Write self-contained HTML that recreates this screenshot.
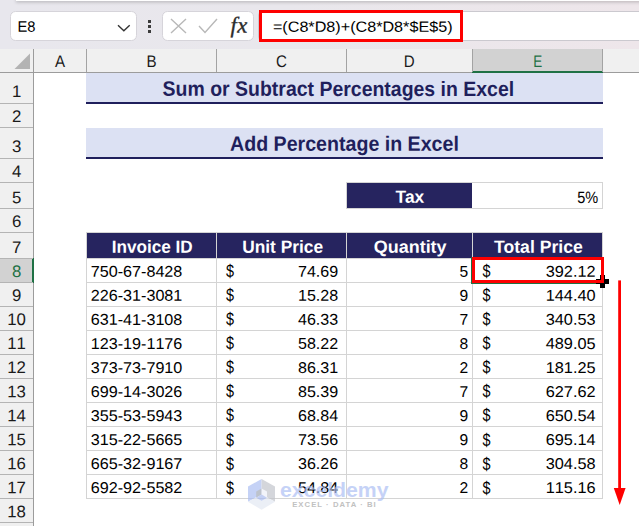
<!DOCTYPE html>
<html><head><meta charset="utf-8"><title>Add Percentage in Excel</title>
<style>
html,body{margin:0;padding:0;}
body{width:639px;height:526px;overflow:hidden;position:relative;background:#fff;font-family:"Liberation Sans",sans-serif;color:#000;}
.abs{position:absolute;}
.t{position:absolute;left:0;top:0;white-space:nowrap;line-height:1;transform-origin:0 0;}
.b{font-weight:bold;}
.nk{font-kerning:none;}
</style></head><body>
<div class="abs" style="left:0px;top:0px;width:639px;height:49px;background:linear-gradient(90deg,#e8e7ed 0%,#e9e7ec 45%,#eee6ea 100%);"></div>
<div class="abs" style="left:15.8px;top:-1px;width:629.2px;height:1.9px;background:#fff;box-shadow:0 1px 3.5px rgba(0,0,0,0.3);"></div>
<div class="abs" style="left:9.9px;top:10.8px;width:127px;height:30px;box-sizing:border-box;background:#fff;border-radius:5.5px;border:0.7px solid #d6d4da;"></div>
<span class="t" style="font-size:15.2px;transform:translate(17.40px,18.80px) rotate(0.03deg) scaleX(0.97);">E8</span>
<svg class="abs" style="left:116px;top:21px" width="16" height="12" viewBox="0 0 16 12"><path d="M2 4.2 L7.85 9.8 L13.7 4.2" fill="none" stroke="#333" stroke-width="1.4"/></svg>
<div class="abs" style="left:148px;top:20px;width:3.1px;height:2.7px;background:#3c3c3c;"></div>
<div class="abs" style="left:148px;top:25.1px;width:3.1px;height:2.7px;background:#3c3c3c;"></div>
<div class="abs" style="left:148px;top:30.2px;width:3.1px;height:2.7px;background:#3c3c3c;"></div>
<div class="abs" style="left:161.6px;top:10.8px;width:92.5px;height:30px;box-sizing:border-box;background:#fff;border-radius:5.5px;border:0.7px solid #d6d4da;"></div>
<svg class="abs" style="left:169px;top:17px" width="20" height="18" viewBox="0 0 20 18"><path d="M2 2 L17 16 M17 2 L2 16" fill="none" stroke="#b8b8b8" stroke-width="1.4"/></svg>
<svg class="abs" style="left:197.2px;top:17px" width="22" height="18" viewBox="0 0 22 18"><path d="M2 9 L8 15.5 L20 2" fill="none" stroke="#b8b8b8" stroke-width="1.4"/></svg>
<span class="t" style="font-family:'Liberation Serif',serif;font-style:italic;font-size:22.5px;color:#2b2b2b;-webkit-text-stroke:0.35px #2b2b2b;transform:translate(230.6px,14.4px) rotate(0.03deg);letter-spacing:0.4px;">fx</span>
<div class="abs" style="left:258px;top:10.7px;width:387px;height:30.1px;box-sizing:border-box;background:#fff;border:0.8px solid #cbc9cf;border-radius:4px 0 0 4px;"></div>
<div class="abs" style="left:259px;top:10px;width:204.1px;height:31.7px;box-sizing:border-box;border:3px solid #fe0000;"></div>
<span class="t" style="font-size:14.8px;transform:translate(272.90px,19.70px) rotate(0.03deg) scaleX(1.092);">=(C8*D8)+(C8*D8*$E$5)</span>
<div class="abs" style="left:0px;top:49px;width:639px;height:23.3px;background:#f0f0f0;"></div>
<div class="abs" style="left:0px;top:72.3px;width:33.5px;height:453.7px;background:#f0f0f0;"></div>
<div class="abs" style="left:472px;top:49px;width:131px;height:23.5px;background:#d2d2d2;"></div>
<div class="abs" style="left:0px;top:258.2px;width:33.5px;height:24px;background:#d2d2d2;"></div>
<div class="abs" style="left:33px;top:49px;width:1.1px;height:477px;background:#9c9c9c;"></div>
<div class="abs" style="left:0px;top:71.7px;width:639px;height:1.1px;background:#9c9c9c;"></div>
<div class="abs" style="left:472px;top:70.8px;width:131.2px;height:2px;background:#1f7145;"></div>
<div class="abs" style="left:32px;top:257.8px;width:1.9px;height:24.9px;background:#1f7145;"></div>
<div class="abs" style="left:86px;top:49.2px;width:1.1px;height:22.8px;background:#a3a3a3;"></div>
<div class="abs" style="left:216px;top:49.2px;width:1.1px;height:22.8px;background:#a3a3a3;"></div>
<div class="abs" style="left:346px;top:49.2px;width:1.1px;height:22.8px;background:#a3a3a3;"></div>
<div class="abs" style="left:471.5px;top:49.2px;width:1.1px;height:22.8px;background:#a3a3a3;"></div>
<div class="abs" style="left:602px;top:49.2px;width:1.1px;height:22.8px;background:#a3a3a3;"></div>
<div class="abs" style="left:0px;top:102.8px;width:33px;height:1.2px;background:#b4b4b4;"></div>
<div class="abs" style="left:0px;top:126.6px;width:33px;height:1.2px;background:#b4b4b4;"></div>
<div class="abs" style="left:0px;top:157.8px;width:33px;height:1.2px;background:#b4b4b4;"></div>
<div class="abs" style="left:0px;top:181.6px;width:33px;height:1.2px;background:#b4b4b4;"></div>
<div class="abs" style="left:0px;top:207.8px;width:33px;height:1.2px;background:#b4b4b4;"></div>
<div class="abs" style="left:0px;top:231.6px;width:33px;height:1.2px;background:#b4b4b4;"></div>
<div class="abs" style="left:0px;top:257.6px;width:33px;height:1.2px;background:#b4b4b4;"></div>
<div class="abs" style="left:0px;top:281.6px;width:33px;height:1.2px;background:#b4b4b4;"></div>
<div class="abs" style="left:0px;top:305.63px;width:33px;height:1.2px;background:#b4b4b4;"></div>
<div class="abs" style="left:0px;top:329.66px;width:33px;height:1.2px;background:#b4b4b4;"></div>
<div class="abs" style="left:0px;top:353.69px;width:33px;height:1.2px;background:#b4b4b4;"></div>
<div class="abs" style="left:0px;top:377.72px;width:33px;height:1.2px;background:#b4b4b4;"></div>
<div class="abs" style="left:0px;top:401.75px;width:33px;height:1.2px;background:#b4b4b4;"></div>
<div class="abs" style="left:0px;top:425.78px;width:33px;height:1.2px;background:#b4b4b4;"></div>
<div class="abs" style="left:0px;top:449.81px;width:33px;height:1.2px;background:#b4b4b4;"></div>
<div class="abs" style="left:0px;top:473.84px;width:33px;height:1.2px;background:#b4b4b4;"></div>
<div class="abs" style="left:0px;top:497.87px;width:33px;height:1.2px;background:#b4b4b4;"></div>
<div class="abs" style="left:0px;top:521.9px;width:33px;height:1.2px;background:#b4b4b4;"></div>
<svg class="abs" style="left:14px;top:53px" width="17" height="17" viewBox="0 0 17 17"><path d="M16 0.5 L16 16 L0.5 16 Z" fill="#b3b3b3"/></svg>
<span class="t" style="font-size:16.8px;transform:translate(60.00px,53.90px) rotate(0.03deg) scaleX(0.9) translateX(-50%);color:#1a1a1a;">A</span>
<span class="t" style="font-size:16.8px;transform:translate(151.50px,53.90px) rotate(0.03deg) scaleX(0.9) translateX(-50%);color:#1a1a1a;">B</span>
<span class="t" style="font-size:16.8px;transform:translate(281.50px,53.90px) rotate(0.03deg) scaleX(0.9) translateX(-50%);color:#1a1a1a;">C</span>
<span class="t" style="font-size:16.8px;transform:translate(409.25px,53.90px) rotate(0.03deg) scaleX(0.9) translateX(-50%);color:#1a1a1a;">D</span>
<span class="t" style="font-size:16.8px;transform:translate(537.65px,53.90px) rotate(0.03deg) scaleX(0.8) translateX(-50%);color:#1f7145;">E</span>
<span class="t nk" style="font-size:16.8px;transform:translate(16.60px,83.90px) rotate(0.03deg) scaleX(1) translateX(-50%);color:#1a1a1a;">1</span>
<span class="t nk" style="font-size:16.8px;transform:translate(16.60px,109.00px) rotate(0.03deg) scaleX(1) translateX(-50%);color:#1a1a1a;">2</span>
<span class="t nk" style="font-size:16.8px;transform:translate(16.60px,138.90px) rotate(0.03deg) scaleX(1) translateX(-50%);color:#1a1a1a;">3</span>
<span class="t nk" style="font-size:16.8px;transform:translate(16.60px,164.00px) rotate(0.03deg) scaleX(1) translateX(-50%);color:#1a1a1a;">4</span>
<span class="t nk" style="font-size:16.8px;transform:translate(16.60px,190.20px) rotate(0.03deg) scaleX(1) translateX(-50%);color:#1a1a1a;">5</span>
<span class="t nk" style="font-size:16.8px;transform:translate(16.60px,214.00px) rotate(0.03deg) scaleX(1) translateX(-50%);color:#1a1a1a;">6</span>
<span class="t nk" style="font-size:16.8px;transform:translate(16.60px,240.00px) rotate(0.03deg) scaleX(1) translateX(-50%);color:#1a1a1a;">7</span>
<span class="t nk" style="font-size:16.8px;transform:translate(16.60px,264.00px) rotate(0.03deg) scaleX(1) translateX(-50%);color:#1f7145;">8</span>
<span class="t nk" style="font-size:16.8px;transform:translate(16.60px,288.03px) rotate(0.03deg) scaleX(1) translateX(-50%);color:#1a1a1a;">9</span>
<span class="t nk" style="font-size:16.8px;transform:translate(16.60px,312.06px) rotate(0.03deg) scaleX(1) translateX(-50%);color:#1a1a1a;">10</span>
<span class="t nk" style="font-size:16.8px;transform:translate(16.60px,336.09px) rotate(0.03deg) scaleX(1) translateX(-50%);color:#1a1a1a;">11</span>
<span class="t nk" style="font-size:16.8px;transform:translate(16.60px,360.12px) rotate(0.03deg) scaleX(1) translateX(-50%);color:#1a1a1a;">12</span>
<span class="t nk" style="font-size:16.8px;transform:translate(16.60px,384.15px) rotate(0.03deg) scaleX(1) translateX(-50%);color:#1a1a1a;">13</span>
<span class="t nk" style="font-size:16.8px;transform:translate(16.60px,408.18px) rotate(0.03deg) scaleX(1) translateX(-50%);color:#1a1a1a;">14</span>
<span class="t nk" style="font-size:16.8px;transform:translate(16.60px,432.21px) rotate(0.03deg) scaleX(1) translateX(-50%);color:#1a1a1a;">15</span>
<span class="t nk" style="font-size:16.8px;transform:translate(16.60px,456.24px) rotate(0.03deg) scaleX(1) translateX(-50%);color:#1a1a1a;">16</span>
<span class="t nk" style="font-size:16.8px;transform:translate(16.60px,480.27px) rotate(0.03deg) scaleX(1) translateX(-50%);color:#1a1a1a;">17</span>
<span class="t nk" style="font-size:16.8px;transform:translate(16.60px,504.30px) rotate(0.03deg) scaleX(1) translateX(-50%);color:#1a1a1a;">18</span>
<div class="abs" style="left:86.2px;top:72.8px;width:516.8px;height:29.2px;background:#dce1f3;"></div>
<div class="abs" style="left:86.2px;top:102px;width:516.8px;height:2px;background:#1f1f5c;"></div>
<div class="abs" style="left:86.2px;top:127.7px;width:516.8px;height:29.3px;background:#dce1f3;"></div>
<div class="abs" style="left:86.2px;top:157px;width:516.8px;height:2px;background:#1f1f5c;"></div>
<div class="abs" style="left:346px;top:181.7px;width:257px;height:27.2px;box-sizing:border-box;border:1px solid #d4d4d4;"></div>
<div class="abs" style="left:346.6px;top:182.9px;width:125.4px;height:25.1px;background:#26245f;"></div>
<div class="abs" style="left:86px;top:232.2px;width:1px;height:266.77px;background:#d4d4d4;"></div>
<div class="abs" style="left:216px;top:232.2px;width:1px;height:266.77px;background:#d4d4d4;"></div>
<div class="abs" style="left:346px;top:232.2px;width:1px;height:266.77px;background:#d4d4d4;"></div>
<div class="abs" style="left:471.5px;top:232.2px;width:1px;height:266.77px;background:#d4d4d4;"></div>
<div class="abs" style="left:602px;top:232.2px;width:1px;height:266.77px;background:#d4d4d4;"></div>
<div class="abs" style="left:86.5px;top:231.7px;width:516.5px;height:1px;background:#d4d4d4;"></div>
<div class="abs" style="left:86.5px;top:257.7px;width:516.5px;height:1px;background:#d4d4d4;"></div>
<div class="abs" style="left:86.5px;top:281.7px;width:516.5px;height:1px;background:#d4d4d4;"></div>
<div class="abs" style="left:86.5px;top:305.73px;width:516.5px;height:1px;background:#d4d4d4;"></div>
<div class="abs" style="left:86.5px;top:329.76px;width:516.5px;height:1px;background:#d4d4d4;"></div>
<div class="abs" style="left:86.5px;top:353.79px;width:516.5px;height:1px;background:#d4d4d4;"></div>
<div class="abs" style="left:86.5px;top:377.82px;width:516.5px;height:1px;background:#d4d4d4;"></div>
<div class="abs" style="left:86.5px;top:401.85px;width:516.5px;height:1px;background:#d4d4d4;"></div>
<div class="abs" style="left:86.5px;top:425.88px;width:516.5px;height:1px;background:#d4d4d4;"></div>
<div class="abs" style="left:86.5px;top:449.91px;width:516.5px;height:1px;background:#d4d4d4;"></div>
<div class="abs" style="left:86.5px;top:473.94px;width:516.5px;height:1px;background:#d4d4d4;"></div>
<div class="abs" style="left:86.5px;top:497.97px;width:516.5px;height:1px;background:#d4d4d4;"></div>
<div class="abs" style="left:87px;top:232.9px;width:129px;height:24.9px;background:#26245f;"></div>
<div class="abs" style="left:217px;top:232.9px;width:129px;height:24.9px;background:#26245f;"></div>
<div class="abs" style="left:347px;top:232.9px;width:124.5px;height:24.9px;background:#26245f;"></div>
<div class="abs" style="left:472.5px;top:232.9px;width:129.5px;height:24.9px;background:#26245f;"></div>
<!--TEXTS-->
<span class="t b" style="font-size:20.8px;transform:translate(162.60px,78.80px) rotate(0.03deg) scaleX(0.936);color:#1f1f5c;">Sum or Subtract Percentages in Excel</span>
<span class="t b" style="font-size:20.8px;transform:translate(230.00px,133.70px) rotate(0.03deg) scaleX(0.943);color:#1f1f5c;">Add Percentage in Excel</span>
<span class="t b" style="font-size:17.6px;transform:translate(409.90px,188.80px) rotate(0.03deg) scaleX(0.985) translateX(-50%);color:#fff;">Tax</span>
<span class="t" style="font-size:16.5px;transform:translate(598.30px,188.60px) rotate(0.03deg) scaleX(0.88) translateX(-100%);">5%</span>
<span class="t b" style="font-size:17.6px;transform:translate(152.20px,238.80px) rotate(0.03deg) scaleX(0.975) translateX(-50%);color:#fff;">Invoice ID</span>
<span class="t b" style="font-size:17.6px;transform:translate(282.60px,238.80px) rotate(0.03deg) scaleX(0.985) translateX(-50%);color:#fff;">Unit Price</span>
<span class="t b" style="font-size:17.6px;transform:translate(410.20px,238.80px) rotate(0.03deg) scaleX(1.02) translateX(-50%);color:#fff;">Quantity</span>
<span class="t b" style="font-size:17.6px;transform:translate(538.40px,238.80px) rotate(0.03deg) scaleX(1) translateX(-50%);color:#fff;">Total Price</span>
<span class="t nk" style="font-size:15.6px;transform:translate(90.80px,263.80px) rotate(0.03deg) scaleX(1.035);">750-67-8428</span>
<span class="t" style="font-size:18px;transform:translate(226.00px,262.30px) rotate(0.03deg) scaleX(0.8);">$</span>
<span class="t nk" style="font-size:15.6px;transform:translate(338.20px,263.80px) rotate(0.03deg) scaleX(1.03) translateX(-100%);">74.69</span>
<span class="t" style="font-size:15.6px;transform:translate(468.30px,263.80px) rotate(0.03deg) scaleX(1) translateX(-100%);">5</span>
<span class="t" style="font-size:18px;transform:translate(482.40px,262.30px) rotate(0.03deg) scaleX(0.8);">$</span>
<span class="t nk" style="font-size:15.6px;transform:translate(595.60px,263.80px) rotate(0.03deg) scaleX(1.045) translateX(-100%);">392.12</span>
<span class="t nk" style="font-size:15.6px;transform:translate(90.80px,287.83px) rotate(0.03deg) scaleX(1.035);">226-31-3081</span>
<span class="t" style="font-size:18px;transform:translate(226.00px,286.33px) rotate(0.03deg) scaleX(0.8);">$</span>
<span class="t nk" style="font-size:15.6px;transform:translate(338.20px,287.83px) rotate(0.03deg) scaleX(1.03) translateX(-100%);">15.28</span>
<span class="t" style="font-size:15.6px;transform:translate(468.30px,287.83px) rotate(0.03deg) scaleX(1) translateX(-100%);">9</span>
<span class="t" style="font-size:18px;transform:translate(482.40px,286.33px) rotate(0.03deg) scaleX(0.8);">$</span>
<span class="t nk" style="font-size:15.6px;transform:translate(595.60px,287.83px) rotate(0.03deg) scaleX(1.045) translateX(-100%);">144.40</span>
<span class="t nk" style="font-size:15.6px;transform:translate(90.80px,311.86px) rotate(0.03deg) scaleX(1.035);">631-41-3108</span>
<span class="t" style="font-size:18px;transform:translate(226.00px,310.36px) rotate(0.03deg) scaleX(0.8);">$</span>
<span class="t nk" style="font-size:15.6px;transform:translate(338.20px,311.86px) rotate(0.03deg) scaleX(1.03) translateX(-100%);">46.33</span>
<span class="t" style="font-size:15.6px;transform:translate(468.30px,311.86px) rotate(0.03deg) scaleX(1) translateX(-100%);">7</span>
<span class="t" style="font-size:18px;transform:translate(482.40px,310.36px) rotate(0.03deg) scaleX(0.8);">$</span>
<span class="t nk" style="font-size:15.6px;transform:translate(595.60px,311.86px) rotate(0.03deg) scaleX(1.045) translateX(-100%);">340.53</span>
<span class="t nk" style="font-size:15.6px;transform:translate(90.80px,335.89px) rotate(0.03deg) scaleX(1.035);">123-19-1176</span>
<span class="t" style="font-size:18px;transform:translate(226.00px,334.39px) rotate(0.03deg) scaleX(0.8);">$</span>
<span class="t nk" style="font-size:15.6px;transform:translate(338.20px,335.89px) rotate(0.03deg) scaleX(1.03) translateX(-100%);">58.22</span>
<span class="t" style="font-size:15.6px;transform:translate(468.30px,335.89px) rotate(0.03deg) scaleX(1) translateX(-100%);">8</span>
<span class="t" style="font-size:18px;transform:translate(482.40px,334.39px) rotate(0.03deg) scaleX(0.8);">$</span>
<span class="t nk" style="font-size:15.6px;transform:translate(595.60px,335.89px) rotate(0.03deg) scaleX(1.045) translateX(-100%);">489.05</span>
<span class="t nk" style="font-size:15.6px;transform:translate(90.80px,359.92px) rotate(0.03deg) scaleX(1.035);">373-73-7910</span>
<span class="t" style="font-size:18px;transform:translate(226.00px,358.42px) rotate(0.03deg) scaleX(0.8);">$</span>
<span class="t nk" style="font-size:15.6px;transform:translate(338.20px,359.92px) rotate(0.03deg) scaleX(1.03) translateX(-100%);">86.31</span>
<span class="t" style="font-size:15.6px;transform:translate(468.30px,359.92px) rotate(0.03deg) scaleX(1) translateX(-100%);">2</span>
<span class="t" style="font-size:18px;transform:translate(482.40px,358.42px) rotate(0.03deg) scaleX(0.8);">$</span>
<span class="t nk" style="font-size:15.6px;transform:translate(595.60px,359.92px) rotate(0.03deg) scaleX(1.045) translateX(-100%);">181.25</span>
<span class="t nk" style="font-size:15.6px;transform:translate(90.80px,383.95px) rotate(0.03deg) scaleX(1.035);">699-14-3026</span>
<span class="t" style="font-size:18px;transform:translate(226.00px,382.45px) rotate(0.03deg) scaleX(0.8);">$</span>
<span class="t nk" style="font-size:15.6px;transform:translate(338.20px,383.95px) rotate(0.03deg) scaleX(1.03) translateX(-100%);">85.39</span>
<span class="t" style="font-size:15.6px;transform:translate(468.30px,383.95px) rotate(0.03deg) scaleX(1) translateX(-100%);">7</span>
<span class="t" style="font-size:18px;transform:translate(482.40px,382.45px) rotate(0.03deg) scaleX(0.8);">$</span>
<span class="t nk" style="font-size:15.6px;transform:translate(595.60px,383.95px) rotate(0.03deg) scaleX(1.045) translateX(-100%);">627.62</span>
<span class="t nk" style="font-size:15.6px;transform:translate(90.80px,407.98px) rotate(0.03deg) scaleX(1.035);">355-53-5943</span>
<span class="t" style="font-size:18px;transform:translate(226.00px,406.48px) rotate(0.03deg) scaleX(0.8);">$</span>
<span class="t nk" style="font-size:15.6px;transform:translate(338.20px,407.98px) rotate(0.03deg) scaleX(1.03) translateX(-100%);">68.84</span>
<span class="t" style="font-size:15.6px;transform:translate(468.30px,407.98px) rotate(0.03deg) scaleX(1) translateX(-100%);">9</span>
<span class="t" style="font-size:18px;transform:translate(482.40px,406.48px) rotate(0.03deg) scaleX(0.8);">$</span>
<span class="t nk" style="font-size:15.6px;transform:translate(595.60px,407.98px) rotate(0.03deg) scaleX(1.045) translateX(-100%);">650.54</span>
<span class="t nk" style="font-size:15.6px;transform:translate(90.80px,432.01px) rotate(0.03deg) scaleX(1.035);">315-22-5665</span>
<span class="t" style="font-size:18px;transform:translate(226.00px,430.51px) rotate(0.03deg) scaleX(0.8);">$</span>
<span class="t nk" style="font-size:15.6px;transform:translate(338.20px,432.01px) rotate(0.03deg) scaleX(1.03) translateX(-100%);">73.56</span>
<span class="t" style="font-size:15.6px;transform:translate(468.30px,432.01px) rotate(0.03deg) scaleX(1) translateX(-100%);">9</span>
<span class="t" style="font-size:18px;transform:translate(482.40px,430.51px) rotate(0.03deg) scaleX(0.8);">$</span>
<span class="t nk" style="font-size:15.6px;transform:translate(595.60px,432.01px) rotate(0.03deg) scaleX(1.045) translateX(-100%);">695.14</span>
<span class="t nk" style="font-size:15.6px;transform:translate(90.80px,456.04px) rotate(0.03deg) scaleX(1.035);">665-32-9167</span>
<span class="t" style="font-size:18px;transform:translate(226.00px,454.54px) rotate(0.03deg) scaleX(0.8);">$</span>
<span class="t nk" style="font-size:15.6px;transform:translate(338.20px,456.04px) rotate(0.03deg) scaleX(1.03) translateX(-100%);">36.26</span>
<span class="t" style="font-size:15.6px;transform:translate(468.30px,456.04px) rotate(0.03deg) scaleX(1) translateX(-100%);">8</span>
<span class="t" style="font-size:18px;transform:translate(482.40px,454.54px) rotate(0.03deg) scaleX(0.8);">$</span>
<span class="t nk" style="font-size:15.6px;transform:translate(595.60px,456.04px) rotate(0.03deg) scaleX(1.045) translateX(-100%);">304.58</span>
<span class="t nk" style="font-size:15.6px;transform:translate(90.80px,480.07px) rotate(0.03deg) scaleX(1.035);">692-92-5582</span>
<span class="t" style="font-size:18px;transform:translate(226.00px,478.57px) rotate(0.03deg) scaleX(0.8);">$</span>
<span class="t nk" style="font-size:15.6px;transform:translate(338.20px,480.07px) rotate(0.03deg) scaleX(1.03) translateX(-100%);">54.84</span>
<span class="t" style="font-size:15.6px;transform:translate(468.30px,480.07px) rotate(0.03deg) scaleX(1) translateX(-100%);">2</span>
<span class="t" style="font-size:18px;transform:translate(482.40px,478.57px) rotate(0.03deg) scaleX(0.8);">$</span>
<span class="t nk" style="font-size:15.6px;transform:translate(595.60px,480.07px) rotate(0.03deg) scaleX(1.045) translateX(-100%);">115.16</span>
<div class="abs" style="left:247px;top:478px;width:150px;height:36px;opacity:0.68;">
<svg class="abs" style="left:0;top:0" width="30" height="34" viewBox="0 0 30 34"><path d="M14.6 1 L1 8.5 L1 23.8 L14.6 16.4 Z" fill="#aabdf3"/><path d="M14.6 1 L28 8.5 L28 23.8 L14.6 16.4 Z" fill="#c1c4cb"/><path d="M1 23.8 L14.6 31.8 L28 23.8 L14.6 16.4 Z" fill="#e2e8f3"/><path d="M14.6 10.4 L9.2 13.5 L9.2 19.7 L14.6 16.6 Z" fill="#9fa7b5"/><path d="M14.6 10.4 L20 13.5 L20 19.7 L14.6 16.6 Z" fill="#edf0f9"/><path d="M9.2 19.7 L14.6 22.8 L20 19.7 L14.6 16.6 Z" fill="#a7baf0"/></svg>
<span class="t b" style="left:32.6px;top:1.6px;font-size:20.6px;color:#abbef4;transform:scaleX(1.03);">exceldemy</span>
<span class="t b" style="left:45.2px;top:22.6px;font-size:7.7px;color:#a4a4a4;letter-spacing:1.05px;">EXCEL · DATA · BI</span>
</div>
<div class="abs" style="left:471.2px;top:256.8px;width:1.2px;height:27px;background:#1f7145;"></div>
<div class="abs" style="left:472px;top:282.9px;width:124.5px;height:1px;background:#1f7145;"></div>
<div class="abs" style="left:596px;top:279.3px;width:13px;height:4.4px;background:#000;"></div>
<div class="abs" style="left:600.2px;top:275.2px;width:4.6px;height:12.6px;background:#000;"></div>
<div class="abs" style="left:471.8px;top:257.2px;width:132.2px;height:26.1px;box-sizing:border-box;border:3px solid #fe0000;"></div>
<svg class="abs" style="left:610px;top:278px" width="20" height="230" viewBox="0 0 20 230"><path d="M9.6 2.4 L9.6 214" stroke="#fe0000" stroke-width="2.8" fill="none"/><path d="M3.8 210 L15.6 210 L9.7 227 Z" fill="#fe0000"/></svg>
</body></html>
